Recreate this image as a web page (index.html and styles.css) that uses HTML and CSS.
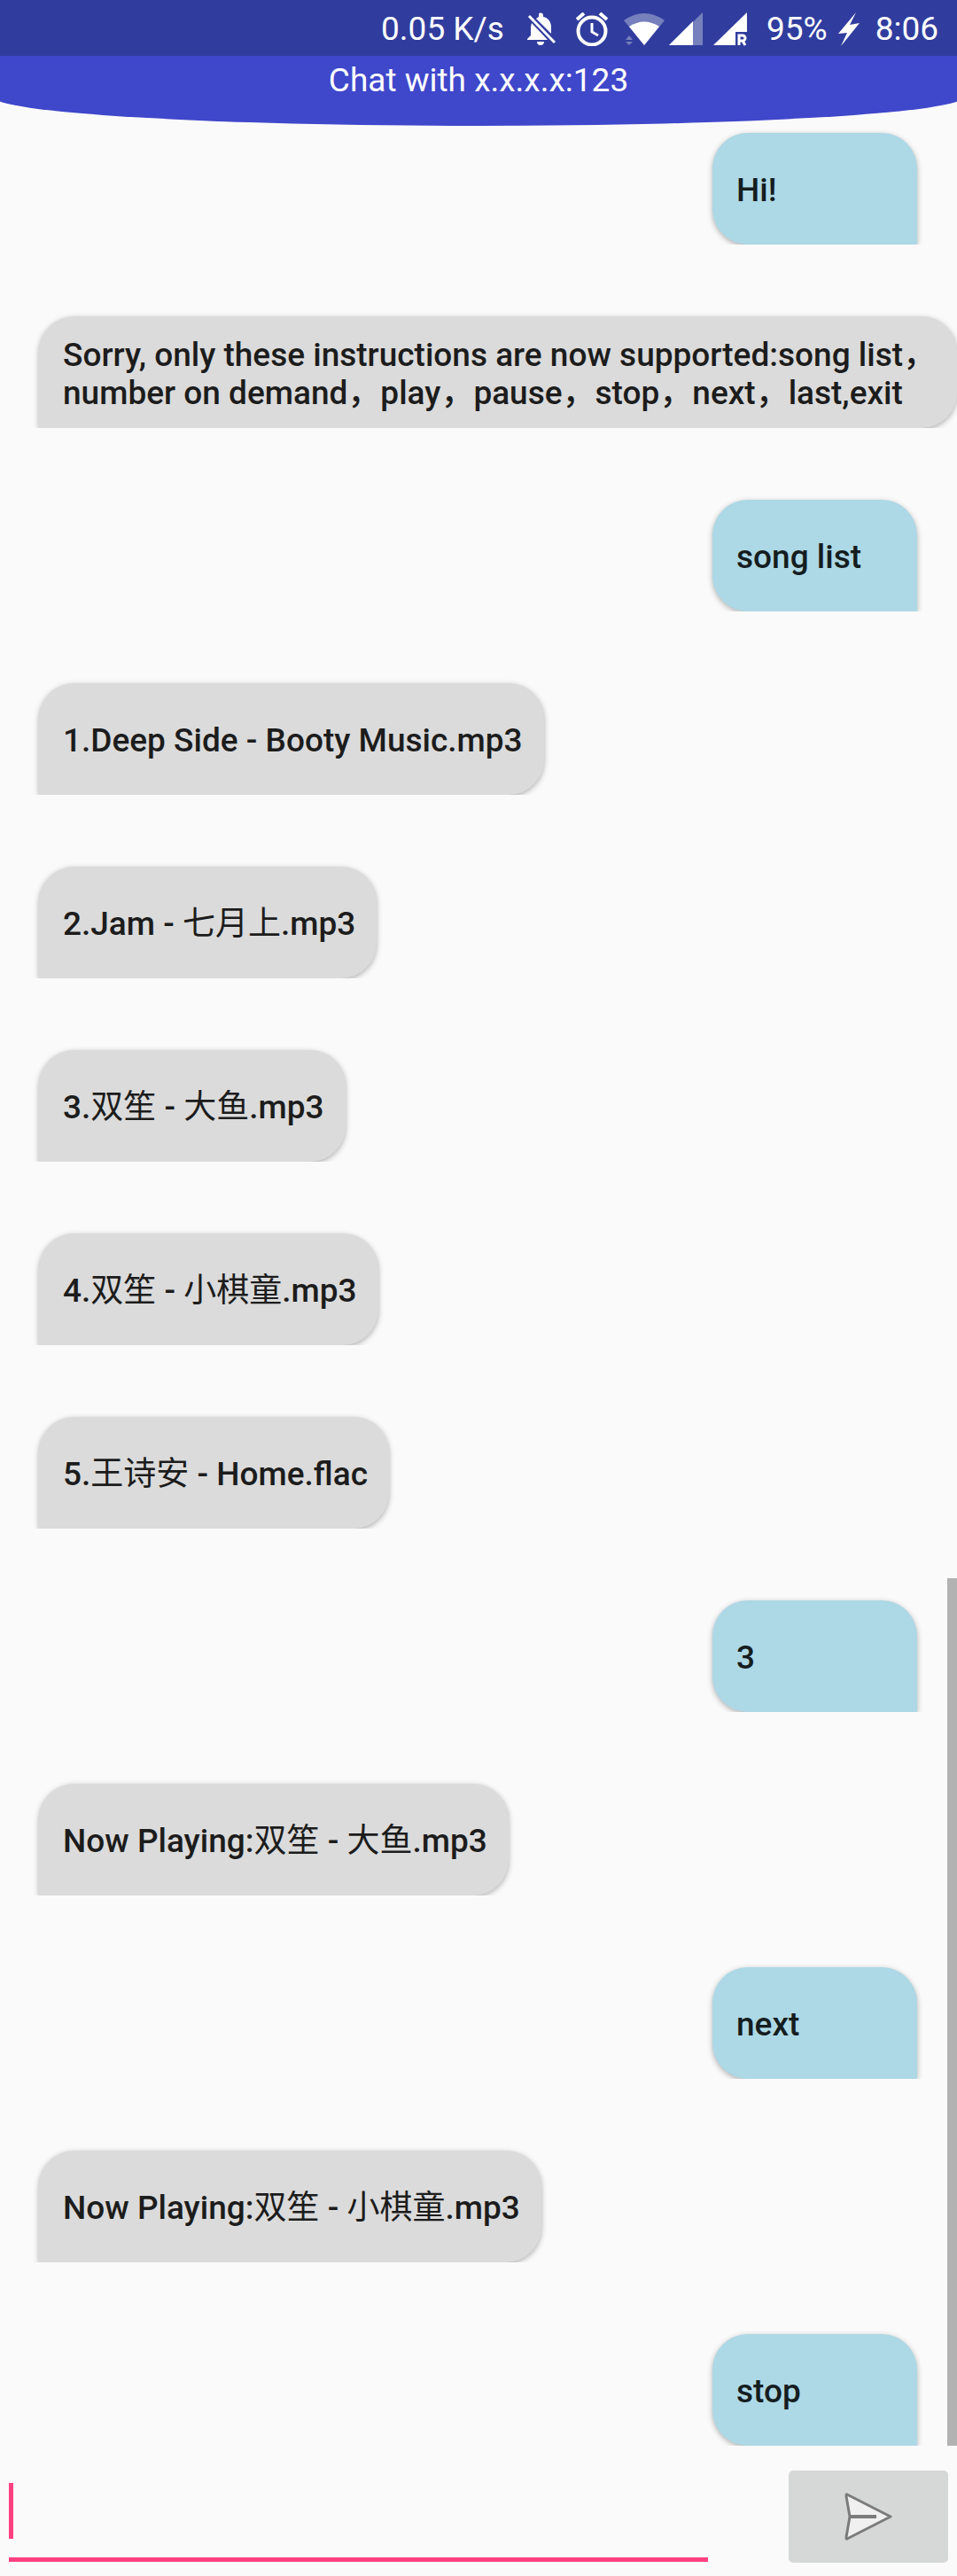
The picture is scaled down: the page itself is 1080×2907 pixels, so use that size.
FILE: index.html
```html
<!DOCTYPE html>
<html lang="en">
<head>
<meta charset="utf-8">
<meta name="viewport" content="width=device-width, initial-scale=1">
<title>Chat with x.x.x.x:123</title>
<link rel="stylesheet" href="styles.css">
</head>
<body>
<div class="status">
  <span class="speed">0.05 K/s</span>
  <svg class="icon bell" viewBox="0 0 32 38" fill="#fff"><path d="M15 0.500c2 0 3 1 3 3V5c6 1 9 6 9 12v7L10 7l3-2V3.500c0-2 0-3 2-3zM5 12l18 19H0v-1l4-4V16zM11 33h8c0 3-2 4-4 4s-4-1-4-4z"/><path d="M2 4l29 30" stroke="#fff" stroke-width="3"/></svg>
  <svg class="icon alarm" viewBox="0 0 36 38" fill="none" stroke="#fff"><circle cx="18" cy="21" r="15.500" stroke-width="4"/><path d="M18 12v10l7 4" stroke-width="3"/><path d="M1 8l8-7M35 8l-8-7" stroke-width="4"/></svg>
  <svg class="icon wifi" viewBox="0 0 46 38"><path d="M0 9Q23-7 46 9L23 37z" fill="#7680bd"/><path d="M6 16Q23 5 40 16L23 37z" fill="#fff"/><path d="M2 31l4-5 4 5zM2 33h8l-4 4z" fill="#7680bd"/></svg>
  <svg class="icon signal" viewBox="0 0 38 38"><path d="M38 0v37H0z" fill="#7680bd"/><path d="M27 10v27H0z" fill="#fff"/></svg>
  <svg class="icon roaming" viewBox="0 0 38 38"><path d="M38 0v22H25v15H0z" fill="#fff"/><path d="M29 37V26h4a3 3 0 0 1 0 6h-4m4 0l3 5" fill="none" stroke="#fff" stroke-width="3"/></svg>
  <span class="battery">95%</span>
  <svg class="icon bolt" viewBox="0 0 24 38" fill="#fff"><path d="M20 0L0 24l10-1L3 38l21-26-11 2z"/></svg>
  <span class="time">8:06</span>
</div>
<header class="header"><h1 class="title">Chat with x.x.x.x:123</h1></header>
<main class="chat">
  <p class="bubble mine">Hi!</p>
  <p class="bubble long">Sorry, only these instructions are now supported:song list，number on demand，play，pause，stop，next，last,exit</p>
  <p class="bubble mine">song list</p>
  <p class="bubble">1.Deep Side - Booty Music.mp3</p>
  <p class="bubble">2.Jam - <span class="han" lang="zh">七月上</span>.mp3</p>
  <p class="bubble">3.<span class="han" lang="zh">双笙</span> - <span class="han" lang="zh">大鱼</span>.mp3</p>
  <p class="bubble">4.<span class="han" lang="zh">双笙</span> - <span class="han" lang="zh">小棋童</span>.mp3</p>
  <p class="bubble">5.<span class="han" lang="zh">王诗安</span> - Home.flac</p>
  <p class="bubble mine">3</p>
  <p class="bubble">Now Playing:<span class="han" lang="zh">双笙</span> - <span class="han" lang="zh">大鱼</span>.mp3</p>
  <p class="bubble mine">next</p>
  <p class="bubble">Now Playing:<span class="han" lang="zh">双笙</span> - <span class="han" lang="zh">小棋童</span>.mp3</p>
  <p class="bubble mine">stop</p>
  <span class="scrollbar"></span>
</main>
<form class="composer">
  <div class="field">
    <input class="input" type="text" aria-label="Message">
    <span class="caret"></span>
  </div>
  <button class="send" type="button" aria-label="Send">
    <svg class="plane" viewBox="0 0 54 54"><path d="M3 2L52 27 3 52Q2 53 2 50L6 27 2 4Q2 1 3 2z" fill="#f0f0f0" stroke="#7b7b7b" stroke-width="3" stroke-linejoin="round"/><path d="M6 27h30" stroke="#7b7b7b" stroke-width="4"/></svg>
  </button>
</form>
</body>
</html>
```
FILE: styles.css
```css
* { box-sizing: border-box; }

body {
  margin: 0;
  min-height: 100vh;
  display: flex;
  flex-direction: column;
  background: #fafafa;
  color: #1c1c1c;
  font: 500 37px/43px Roboto, "Noto Sans CJK SC", sans-serif;
}

.status {
  display: flex;
  align-items: center;
  justify-content: flex-end;
  height: 63px;
  padding: 2px 21px 0 0;
  background: #303d9e;
  color: #fff;
  font-weight: 400;
}

.icon { display: block; height: 38px; flex: none; }
.bell { width: 32px; margin-left: 26px; }
.alarm { width: 36px; margin-left: 23px; }
.wifi { width: 46px; margin-left: 18px; }
.signal { width: 38px; margin-left: 5px; }
.roaming { width: 38px; margin-left: 12px; }
.battery { margin-left: 22px; }
.bolt { width: 24px; margin-left: 12px; }
.time { margin-left: 18px; }

.header { overflow: hidden; color: #fff; text-align: center; }

.title {
  margin: 0 -8px;
  padding: 6px 0 30px;
  border-radius: 0 0 50% 50% / 0 0 33px 33px;
  background: #3f47cb;
  font: inherit;
  font-weight: 400;
}

.chat {
  position: relative;
  display: flex;
  flex-direction: column;
  align-items: flex-start;
  gap: 81px;
  padding: 8px 0 0 44px;
}

.bubble {
  display: flow-root;
  min-height: 126px;
  margin: 0;
  padding: 43px 24px 40px 27px;
  border-radius: 40px 40px 40px 0;
  background: #dbdbdb;
  box-shadow: 0 2px 6px rgba(0, 0, 0, 0.3);
  clip-path: inset(-8px -8px 0 -8px);
}

.long { padding: 22px 16px 18px 27px; }

.mine {
  align-self: flex-end;
  min-width: 231px;
  margin-right: 45px;
  border-radius: 40px 40px 0 40px;
  background: #add8e6;
  color: #151d20;
}

.han { font-weight: 400; line-height: 1; }

.scrollbar {
  position: absolute;
  right: 0;
  bottom: 0;
  width: 11px;
  height: 37.4%;
  background: #b2b2b2;
}

.composer {
  display: flex;
  align-items: center;
  justify-content: space-between;
  gap: 91px;
  padding: 28px 10px 15px;
}

.field { position: relative; flex: 1; }

.input {
  display: block;
  width: 100%;
  height: 101px;
  padding: 0;
  border: 0;
  border-bottom: 5px solid #ff4081;
  background: none;
  font: inherit;
  outline: 0;
}

.caret {
  position: absolute;
  left: 0;
  top: 12px;
  width: 5px;
  height: 63px;
  background: #ff4081;
}

.send {
  display: grid;
  place-items: center;
  width: 180px;
  height: 104px;
  padding: 0;
  border: 0;
  border-radius: 5px;
  background: #d6d8d7;
}

.plane { width: 54px; height: 54px; }
```
